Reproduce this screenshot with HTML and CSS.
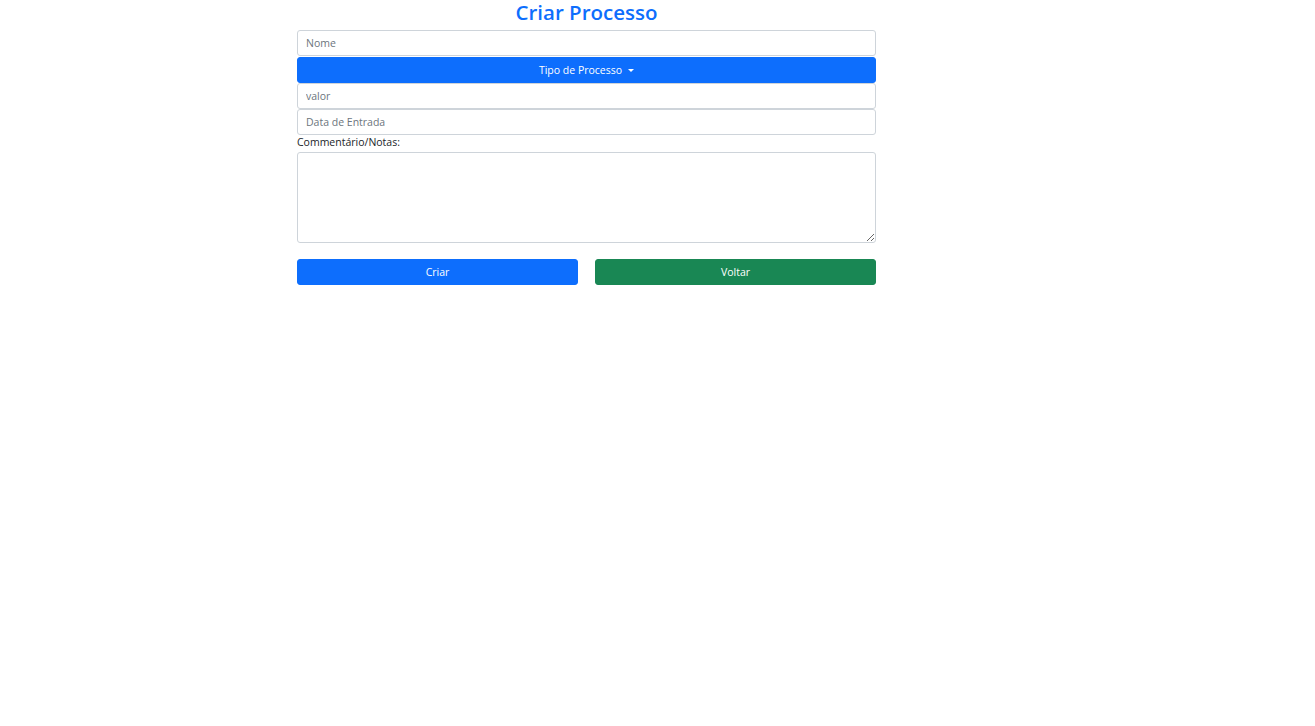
FILE: index.html
```html
<!DOCTYPE html>
<html lang="pt">
<head>
<meta charset="utf-8">
<title>Criar Processo</title>
<link rel="stylesheet" href="styles.css">
</head>
<body>
<main class="page">
  <form class="form">
    <h1 class="title">Criar Processo</h1>
    <input class="field" type="text" placeholder="Nome">
    <button type="button" class="btn btn-primary dropdown">Tipo de Processo <span class="caret"></span></button>
    <input class="field" type="text" placeholder="valor">
    <input class="field" type="text" placeholder="Data de Entrada">
    <label class="label" for="notes">Commentário/Notas:</label>
    <textarea id="notes" class="notes"></textarea>
    <div class="actions">
      <button type="button" class="btn btn-primary">Criar</button>
      <button type="button" class="btn btn-success">Voltar</button>
    </div>
  </form>
</main>
</body>
</html>
```
FILE: styles.css
```css
* { box-sizing: border-box; }
html, body { margin: 0; padding: 0; background: #fff; }
body {
  font-family: "Open Sans", "Noto Sans", "Liberation Sans", sans-serif;
  color: #212529;
  font-size: 10.5px;
}
.page { padding-left: 297px; }
.form {
  width: 579px;
  display: flex;
  flex-direction: column;
}
.title {
  margin: 0 0 2px;
  height: 28px;
  line-height: 25px;
  text-align: center;
  font-size: 20.5px;
  font-weight: 600;
  color: #0d6efd;
}
.field {
  height: 26px;
  border: 1px solid #ced4da;
  border-radius: 3px;
  padding: 0 8px;
  font: inherit;
  color: #212529;
  background: #fff;
  outline: none;
}
.field::placeholder { color: #6c757d; }
.btn {
  height: 26px;
  border: 1px solid transparent;
  border-radius: 3px;
  font: inherit;
  color: #fff;
  cursor: pointer;
  padding: 0 10px;
}
.btn-primary { background: #0d6efd; border-color: #0d6efd; }
.btn-success { background: #198754; border-color: #198754; }
.dropdown {
  display: flex;
  align-items: center;
  justify-content: center;
  gap: 6px;
  margin-top: 1px;
}
.caret {
  width: 0;
  height: 0;
  border-left: 3.5px solid transparent;
  border-right: 3.5px solid transparent;
  border-top: 3.5px solid #fff;
}
.label {
  display: block;
  line-height: 15px;
  color: #212529;
}
.notes {
  margin-top: 2px;
  height: 91px;
  border: 1px solid #ced4da;
  border-radius: 3px;
  font: inherit;
  resize: vertical;
  outline: none;
}
.actions {
  display: grid;
  grid-template-columns: 1fr 1fr;
  column-gap: 17px;
  margin-top: 16px;
}
```
